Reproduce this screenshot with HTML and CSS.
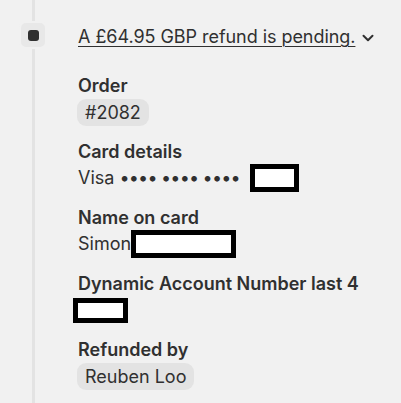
FILE: index.html
```html
<!DOCTYPE html>
<html lang="en">
<head>
<meta charset="utf-8">
<link rel="stylesheet" href="styles.css">
</head>
<body>
<div class="timeline">
  <div class="rail">
    <div class="marker"><span class="dot"></span></div>
  </div>
  <div class="content">
    <div class="title-row">
      <a class="title">A £64.95 GBP refund is pending.</a>
      <svg class="chevron" width="14" height="14" viewBox="0 0 14 14"><path d="M2.5 4.8 7 9.2 11.5 4.8" fill="none" stroke="#303030" stroke-width="2" stroke-linecap="round" stroke-linejoin="round"/></svg>
    </div>
    <dl class="details">
      <div class="group">
        <dt class="label">Order</dt>
        <dd class="value"><span class="tag">#2082</span></dd>
      </div>
      <div class="group">
        <dt class="label">Card details</dt>
        <dd class="value">Visa <span class="mask">•••• •••• ••••</span><span class="redact redact-card"></span></dd>
      </div>
      <div class="group">
        <dt class="label">Name on card</dt>
        <dd class="value">Simon<span class="redact redact-name"></span></dd>
      </div>
      <div class="group">
        <dt class="label">Dynamic Account Number last 4</dt>
        <dd class="value"><span class="redact redact-dan"></span></dd>
      </div>
      <div class="group">
        <dt class="label">Refunded by</dt>
        <dd class="value"><span class="tag">Reuben Loo</span></dd>
      </div>
    </dl>
  </div>
</div>
</body>
</html>
```
FILE: styles.css
```css
html, body {
  margin: 0;
  padding: 0;
  background: #f1f1f1;
}
body {
  font-family: Inter, "Noto Sans", sans-serif;
  color: #303030;
  font-size: 18px;
  width: 401px;
  height: 403px;
  overflow: hidden;
}
.timeline {
  display: flex;
  min-height: 403px;
}
.rail {
  width: 78px;
  flex: none;
  padding-top: 21px;
  padding-left: 19px;
  box-sizing: border-box;
  background: linear-gradient(to right, transparent 32px, #e3e3e3 32px, #e3e3e3 35px, transparent 35px);
}
.marker {
  width: 24px;
  height: 24px;
  border: 2px solid #f1f1f1;
  border-radius: 7px;
  background: #e8e8e8;
  display: flex;
  align-items: center;
  justify-content: center;
}
.dot {
  width: 11px;
  height: 11px;
  border-radius: 3px;
  background: #303030;
}
.content {
  flex: 1;
  padding-top: 25px;
}
.title-row {
  display: flex;
  align-items: center;
  gap: 6px;
  height: 24px;
}
.title {
  text-decoration: underline;
  text-underline-offset: 3px;
  text-decoration-thickness: 1px;
  line-height: 24px;
  letter-spacing: -0.05px;
}
.chevron {
  margin-top: 1px;
}
.details {
  margin: 25px 0 0;
  display: flex;
  flex-direction: column;
  gap: 14px;
}
.group {
  display: flex;
  flex-direction: column;
}
.label {
  font-weight: 600;
  line-height: 24px;
}
.value {
  margin: 0;
  line-height: 28px;
  height: 28px;
  display: flex;
  align-items: center;
  white-space: pre;
}
.mask {
  letter-spacing: -0.8px;
}
.tag {
  display: inline-block;
  background: #e3e3e3;
  border-radius: 9px;
  padding: 0 8px;
  line-height: 27px;
  margin-left: -1px;
}
.redact {
  display: inline-block;
  box-sizing: border-box;
  border: 5px solid #000;
  background: #fff;
}
.redact-card {
  width: 49px;
  height: 28px;
  margin-left: 10px;
}
.redact-name {
  width: 105px;
  height: 28px;
  margin-left: 0;
}
.redact-dan {
  width: 55px;
  height: 25px;
  margin-left: -5px;
}
```
